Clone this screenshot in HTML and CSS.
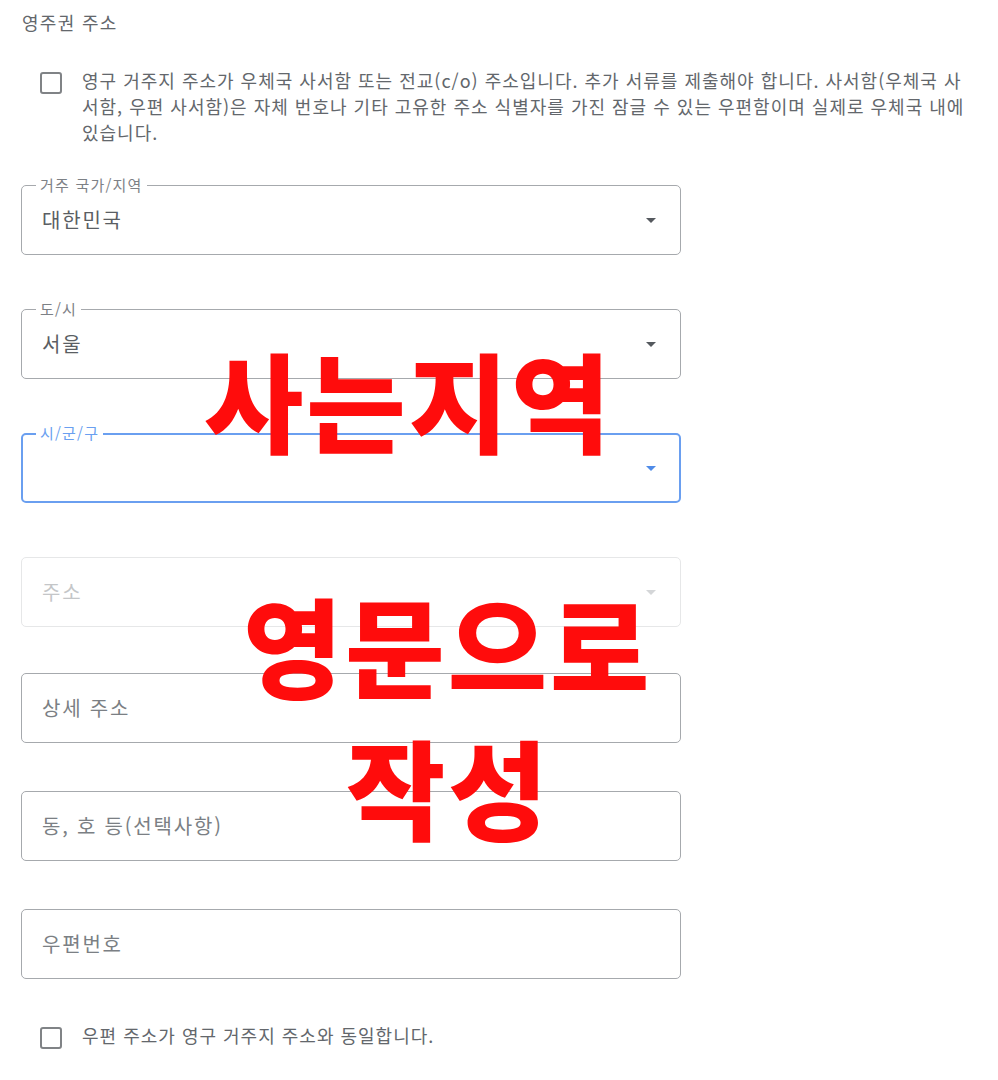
FILE: index.html
```html
<!DOCTYPE html>
<html lang="ko">
<head>
<meta charset="utf-8">
<link rel="stylesheet" href="styles.css">
</head>
<body>
<div class="page">
  <div class="title">영주권 주소</div>
  <div class="check-row first">
    <span class="box"></span>
    <p class="check-text wide">영구 거주지 주소가 우체국 사서함 또는 전교(c/o) 주소입니다. 추가 서류를 제출해야 합니다. 사서함(우체국 사서함, 우편 사서함)은 자체 번호나 기타 고유한 주소 식별자를 가진 잠글 수 있는 우편함이며 실제로 우체국 내에 있습니다.</p>
  </div>

  <div class="form">
    <div class="field select">
      <span class="label">거주 국가/지역</span>
      <span class="value">대한민국</span>
      <span class="arrow"></span>
    </div>
    <div class="field select">
      <span class="label">도/시</span>
      <span class="value">서울</span>
      <span class="arrow"></span>
    </div>
    <div class="field select focused">
      <span class="label">시/군/구</span>
      <span class="value"></span>
      <span class="arrow"></span>
    </div>
    <div class="field select disabled">
      <span class="value placeholder">주소</span>
      <span class="arrow"></span>
    </div>
    <div class="field text">
      <span class="value placeholder">상세 주소</span>
    </div>
    <div class="field text">
      <span class="value placeholder">동, 호 등(선택사항)</span>
    </div>
    <div class="field text last">
      <span class="value placeholder">우편번호</span>
    </div>
  </div>

  <div class="check-row">
    <span class="box"></span>
    <p class="check-text">우편 주소가 영구 거주지 주소와 동일합니다.</p>
  </div>
</div>

<div class="stamp stamp-1">사는지역</div>
<div class="stamp stamp-2">영문으로</div>
<div class="stamp stamp-3">작성</div>
</body>
</html>
```

FILE: styles.css
```css
* { box-sizing: border-box; }

html, body {
  margin: 0;
  padding: 0;
  background: #ffffff;
}

body {
  width: 998px;
  height: 1080px;
  position: relative;
  overflow: hidden;
  font-family: "Noto Sans CJK KR", "Noto Sans", sans-serif;
  color: #5f6368;
}

.page {
  padding: 10px 0 0 21px;
}

.title {
  font-size: 18px;
  line-height: 24px;
  letter-spacing: 1.3px;
  padding-left: 1px;
  color: #63676c;
}

.check-row {
  display: flex;
  align-items: flex-start;
  margin-left: 19px;
}

.check-row.first {
  margin-top: 33px;
}

.box {
  flex: none;
  width: 22px;
  height: 22px;
  border: 2px solid #808386;
  border-radius: 3px;
  margin-top: 5px;
  margin-right: 20px;
}

.check-text {
  margin: 0;
  font-size: 18px;
  line-height: 26px;
  letter-spacing: 1px;
  color: #63676c;
}

.check-text.wide {
  width: 892px;
}

.form {
  margin-top: 40px;
  width: 660px;
}

.field {
  position: relative;
  height: 70px;
  border: 1px solid #a6a9ad;
  border-radius: 5px;
  display: flex;
  align-items: center;
  padding: 0 24px 0 20px;
}

.field.select { margin-bottom: 54px; }
.field.select.disabled { margin-bottom: 46px; }
.field.text { margin-bottom: 48px; }
.field.text.last { margin-bottom: 43px; }

.field.focused {
  border: 2px solid #6a9ff0;
  padding-left: 19px;
  padding-right: 23px;
}

.field.disabled {
  border-color: #e6e7e8;
}

.label {
  position: absolute;
  top: -10px;
  left: 14px;
  padding: 0 4px;
  background: #ffffff;
  font-size: 15px;
  line-height: 18px;
  letter-spacing: 1.2px;
  color: #7d8186;
}

.focused .label {
  left: 13px;
  top: -11px;
  color: #6a9ff0;
}

.value {
  flex: 1;
  font-size: 20px;
  line-height: 26px;
  letter-spacing: 1.8px;
  color: #5a5e63;
}

.value.placeholder {
  color: #7b7f84;
}

.disabled .value.placeholder {
  color: #c4c6c8;
}

.arrow {
  flex: none;
  width: 0;
  height: 0;
  border-left: 5px solid transparent;
  border-right: 5px solid transparent;
  border-top: 5px solid #55595e;
}

.focused .arrow { border-top-color: #4f8be8; }
.disabled .arrow { border-top-color: #d4d6d8; }

.stamp {
  position: absolute;
  font-family: "Noto Sans CJK KR", sans-serif;
  font-weight: 900;
  font-size: 108px;
  letter-spacing: 3px;
  line-height: 1;
  color: #ff0c0c;
  white-space: nowrap;
}

.stamp-1 { left: 204px; top: 344px; }
.stamp-2 { left: 243px; top: 589px; }
.stamp-3 { left: 346px; top: 731px; }
```
